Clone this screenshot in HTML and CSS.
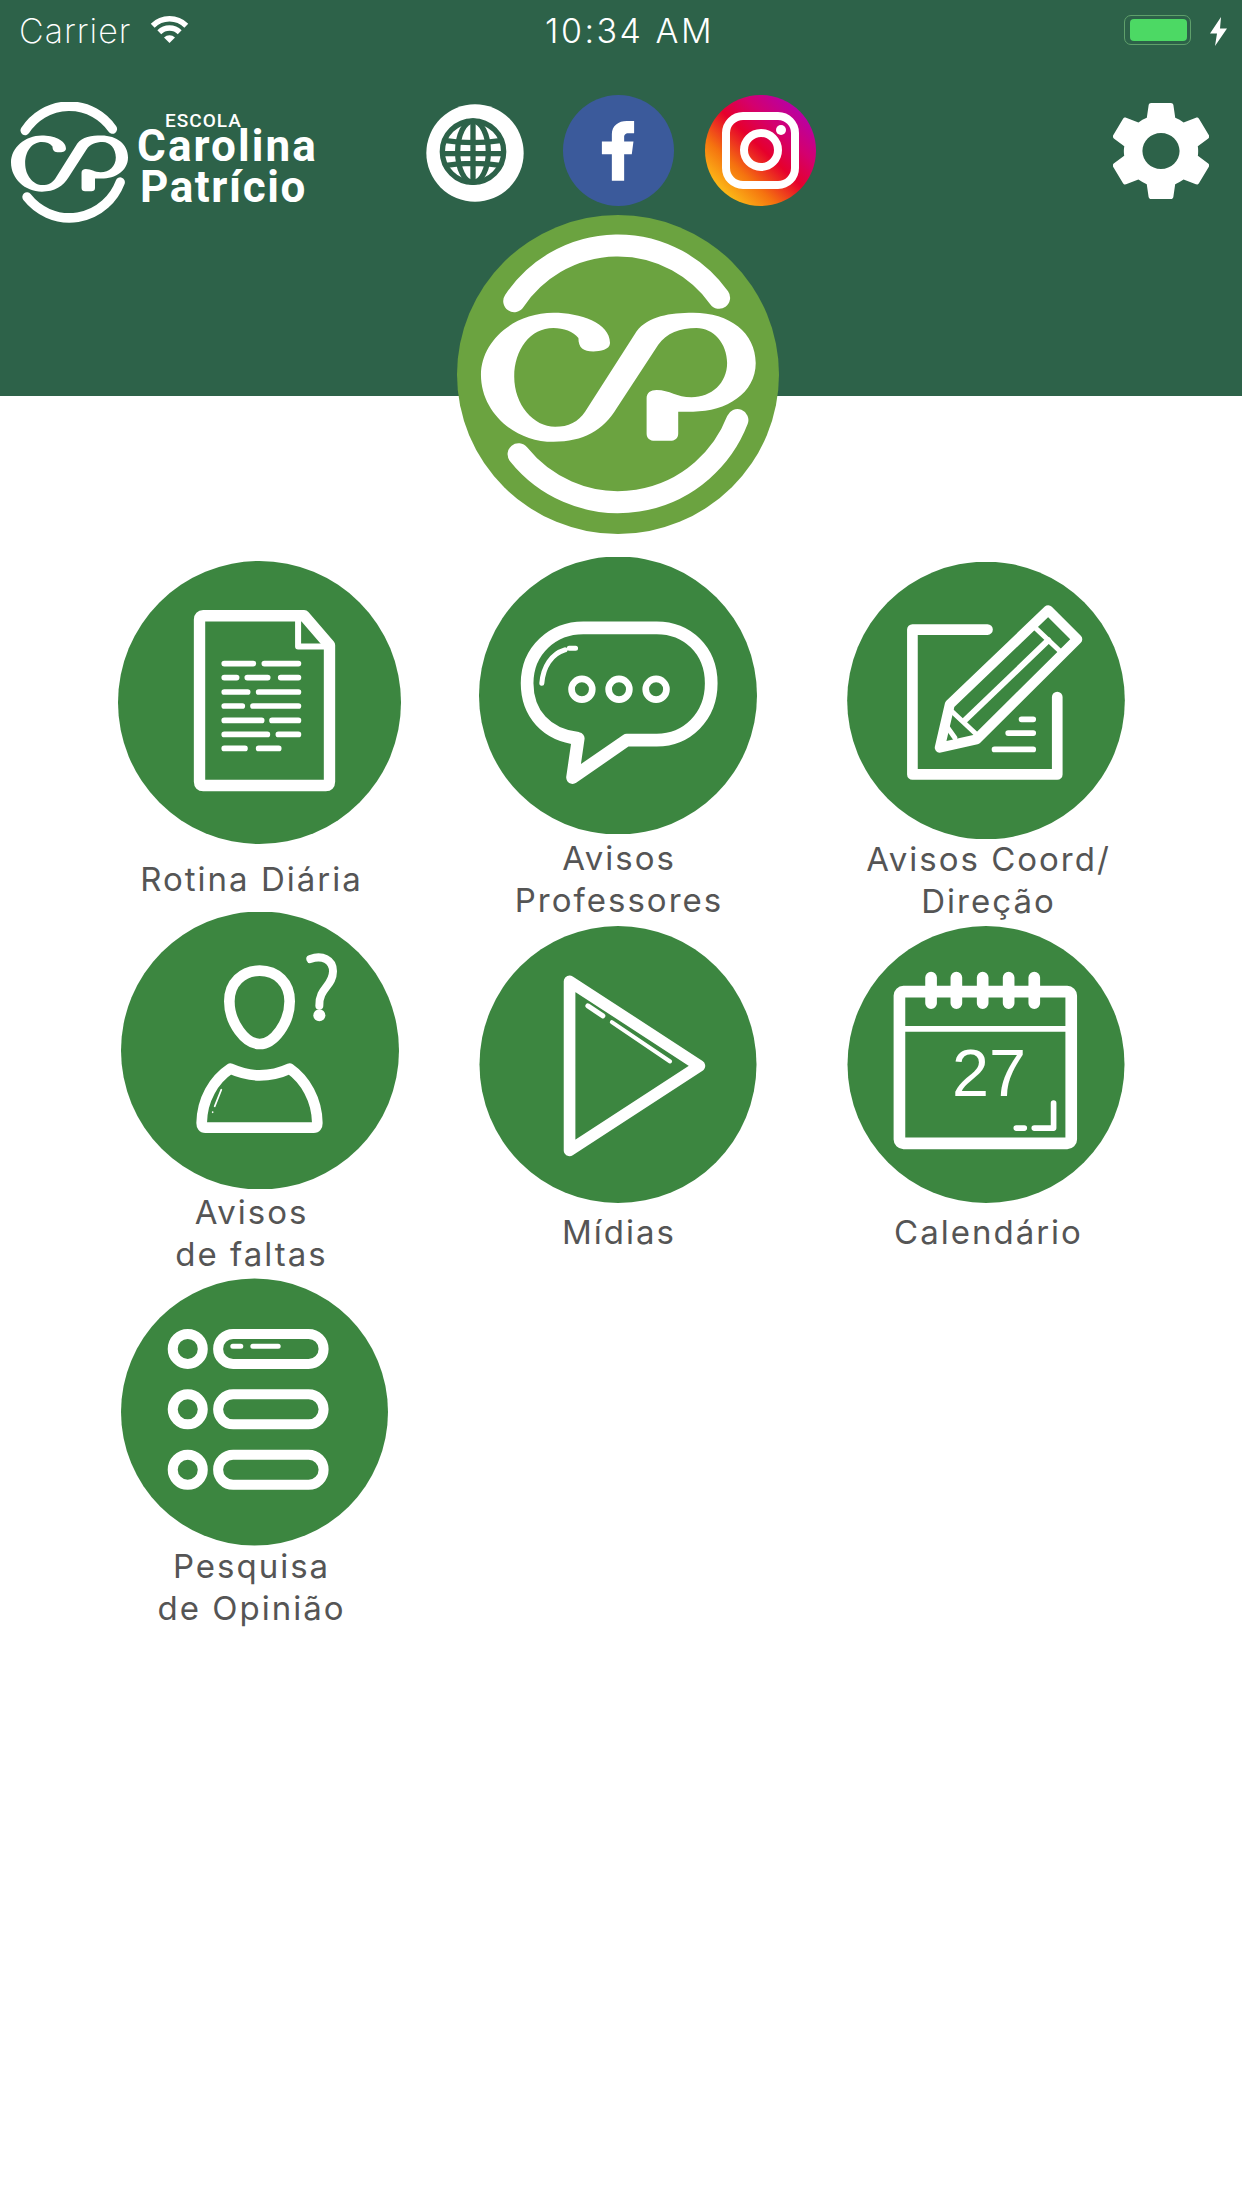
FILE: index.html
```html
<!DOCTYPE html>
<html lang="pt">
<head>
<meta charset="utf-8">
<title>Escola Carolina Patrício</title>
<link rel="stylesheet" href="styles.css">
</head>
<body>
<div class="page">
  <header class="header">
    <div class="status">
      <div class="status-left">
        <span class="carrier">Carrier</span>
        <svg class="wifi" viewBox="0 0 39 27"><path class="ln" d="M2.7 9.7A24 24 0 0 1 36.3 9.7M9.3 16.3A14.5 14.5 0 0 1 29.7 16.3"/><path class="fl" d="M14 21.5A8 8 0 0 1 25 21.5L19.5 27Z"/></svg>
      </div>
      <span class="time">10:34 AM</span>
      <div class="status-right">
        <div class="battery"><div class="battery-fill"></div></div>
        <svg class="bolt" viewBox="0 0 17 29"><path class="fl" d="M11 0L0 16.500H7L5 29L17 11.500H10Z"/></svg>
      </div>
    </div>
    <nav class="nav">
      <div class="brand">
        <svg class="brand-mark" viewBox="122 110 826 830" preserveAspectRatio="none"><use href="#cp"/></svg>
        <div class="brand-text">
          <span class="brand-small">ESCOLA</span>
          <span class="brand-line">Carolina</span>
          <span class="brand-line brand-line-2">Patrício</span>
        </div>
      </div>
      <svg class="globe" viewBox="18 28 294 292">
        <circle class="w" cx="165" cy="174" r="146"/>
        <g class="globe-lines">
          <circle cx="159" cy="170" r="92"/>
          <ellipse cx="159" cy="170" rx="46" ry="92"/>
          <path d="M159 78V262M72 136Q159 150 246 136M67 176H251M72 212Q159 198 246 212"/>
        </g>
      </svg>
      <svg class="fb" viewBox="428 0 334 334">
        <circle class="fb-bg" cx="595" cy="167" r="167"/>
        <path class="fl" d="M575 258V178H545V140H575V118C575 92 595 78 620 78H642V115H625C615 115 612 120 612 128V140H640L635 178H612V258Z"/>
      </svg>
      <svg class="insta" viewBox="0 0 111 111">
        <defs><linearGradient id="ig" x1="0.12" y1="0.95" x2="0.92" y2="0.1"><stop offset="0" stop-color="#ffd21a"/><stop offset="0.28" stop-color="#f5730f"/><stop offset="0.52" stop-color="#e6002c"/><stop offset="0.72" stop-color="#d4006e"/><stop offset="1" stop-color="#b000b4"/></linearGradient></defs>
        <circle cx="55.500" cy="55.500" r="55.500" fill="url(#ig)"/>
        <rect class="ln ig-line" x="21" y="21" width="69" height="69" rx="17"/>
        <circle class="ln ig-line" cx="56" cy="55" r="17"/>
        <circle class="fl" cx="76" cy="35" r="5"/>
      </svg>
      <svg class="gear" viewBox="2.700 2 18.600 20" preserveAspectRatio="none"><path class="fl" d="M19.140 12.940c.04-.3.06-.61.06-.94 0-.32-.02-.64-.07-.94l2.030-1.580c.18-.14.23-.41.12-.61l-1.920-3.320c-.12-.22-.37-.29-.59-.22l-2.390.96c-.5-.38-1.030-.7-1.620-.94l-.36-2.540c-.04-.24-.24-.41-.48-.41h-3.840c-.24 0-.43.17-.47.41l-.36 2.540c-.59.24-1.130.57-1.620.94l-2.390-.96c-.22-.08-.47 0-.59.22L2.740 8.870c-.12.21-.08.47.12.61l2.030 1.580c-.05.3-.09.63-.09.94s.02.64.07.94l-2.030 1.580c-.18.14-.23.41-.12.61l1.920 3.320c.12.22.37.29.59.22l2.390-.96c.5.38 1.030.7 1.620.94l.36 2.540c.05.24.24.41.48.41h3.840c.24 0 .44-.17.47-.41l.36-2.540c.59-.24 1.130-.56 1.620-.94l2.390.96c.22.08.47 0 .59-.22l1.920-3.320c.12-.22.07-.47-.12-.61l-2.010-1.580zM12 15.600c-1.980 0-3.600-1.620-3.600-3.600s1.620-3.600 3.600-3.600 3.600 1.620 3.600 3.600-1.620 3.600-3.600 3.600z"/></svg>
    </nav>
  </header>

  <svg class="hero" viewBox="50 48 968 952" preserveAspectRatio="none">
    <ellipse class="hero-bg" cx="534" cy="524" rx="484" ry="476"/>
    <g id="cp">
      <path class="ln cp-arc" d="M222 305A375 375 0 0 1 838 295"/>
      <path class="ln cp-arc" d="M235 762A385 385 0 0 0 893 660"/>
      <path class="fl" d="M415 415C400 395 370 385 340 385C270 385 222 450 222 530C222 615 280 680 345 680C385 680 415 665 435 635L590 395C625 350 690 340 760 340C870 340 948 400 948 490C948 580 860 635 760 635L715 635L715 700C715 715 705 722 690 722L645 722C630 722 620 715 620 700L620 595C620 578 632 570 650 570C690 570 710 592 755 592C815 592 862 550 862 490C862 430 820 385 770 385C720 385 680 400 655 435L530 625C490 690 430 725 340 725C220 725 122 635 122 525C122 425 220 340 340 340C420 340 510 370 510 430C510 450 480 455 460 455C430 455 415 445 415 415Z"/>
    </g>
  </svg>

  <main class="menu">
    <a class="item item-r1a">
      <svg class="disc disc-lg disc-c1" viewBox="55 33 847 847">
        <circle class="bg" cx="478.500" cy="456.500" r="423.500"/>
        <path class="ln s34" d="M310 197H612L688 285V694Q688 705 677 705H310Q299 705 299 694V208Q299 197 310 197Z"/>
        <path class="ln s18" d="M594 205V289H680"/>
        <path class="ln s17" d="M373 340H460M493 340H595M373 382H410M442 382H503M542 382H595M373 425H443M476 425H595M373 467H427M459 467H595M373 510H485M516 510H595M373 552H502M535 552H595M373 594H435M476 594H536"/>
      </svg>
      <span class="label label-gap14">Rotina Diária</span>
    </a>
    <a class="item">
      <svg class="disc" viewBox="58 22 832 829">
        <circle class="bg" cx="474" cy="436.500" r="416"/>
        <path class="ln s38" d="M370 234H590C680 234 753 300 753 400C753 500 680 570 590 570H500L338 682L355 565C260 555 202 490 202 400C202 300 280 234 370 234Z"/>
        <path class="ln s15" d="M246 400C250 350 275 312 315 300M328 295H347"/>
        <circle class="ln s20" cx="366" cy="418" r="31"/>
        <circle class="ln s20" cx="477" cy="418" r="31"/>
        <circle class="ln s20" cx="588" cy="418" r="31"/>
      </svg>
      <span class="label label-gap3">Avisos<br>Professores</span>
    </a>
    <a class="item item-r1c item-c3">
      <svg class="disc" viewBox="52 35 833 827">
        <circle class="bg" cx="468.500" cy="448.500" r="416"/>
        <path class="ln s32" d="M473 236H248V670H682V438"/>
        <path class="ln s30" d="M655 178L742 265L440 565L330 590L360 460Z"/>
        <path class="ln s15" d="M610 225L700 310M365 480L445 555M350 525L375 560"/>
        <path class="ln s18" d="M405 508L655 268"/>
        <path class="ln s17" d="M575 505H610M535 546H610M494 595H610"/>
      </svg>
      <span class="label label-up">Avisos Coord/<br>Direção</span>
    </a>

    <a class="item">
      <svg class="disc disc-c4" viewBox="62 37 834 831">
        <circle class="bg" cx="479" cy="452.500" r="417"/>
        <path class="ln s32" d="M478 213C530 213 568 250 568 305C568 370 520 433 478 433C436 433 387 370 387 305C387 250 426 213 478 213Z"/>
        <path class="ln s32" d="M390 507C420 520 450 527 478 527C510 527 540 520 568 507C615 540 650 600 651 670Q651 684 640 684H315Q304 684 304 670C305 600 340 540 390 507Z"/>
        <path class="ln s24" d="M630 178C665 165 698 180 698 215C698 260 655 265 657 318"/>
        <circle class="fl" cx="657" cy="347" r="18"/>
        <path class="ln s5" d="M363 570L343 620M337 637V638"/>
      </svg>
      <span class="label label-gap2">Avisos<br>de faltas</span>
    </a>
    <a class="item item-r2">
      <svg class="disc" viewBox="57 48 833 832">
        <circle class="bg" cx="473.500" cy="464" r="416"/>
        <path class="ln s35" d="M328 214L718 468L328 722Z"/>
        <path class="ln s15" d="M383 288L428 318"/>
        <path class="ln s12" d="M455 337L630 455"/>
      </svg>
      <span class="label label-gap8">Mídias</span>
    </a>
    <a class="item item-r2 item-c3">
      <svg class="disc" viewBox="50 48 834 832">
        <circle class="bg" cx="467" cy="464" r="416"/>
        <rect class="ln s35" x="207" y="245" width="516" height="456" rx="12"/>
        <path class="ln s18 butt" d="M207 357H723"/>
        <path class="ln s35" d="M302 203V280M378 203V280M457 203V280M535 203V280M612 203V280"/>
        <text class="cal-day" x="476" y="558">27</text>
        <path class="ln s17" d="M670 580V655H612M558 655H582"/>
      </svg>
      <span class="label label-gap8">Calendário</span>
    </a>

    <a class="item">
      <svg class="disc disc-sm disc-c7" viewBox="62 55 800 802">
        <circle class="bg" cx="462" cy="456" r="400"/>
        <circle class="ln s30" cx="262" cy="267" r="45"/>
        <circle class="ln s30" cx="262" cy="448" r="45"/>
        <circle class="ln s30" cx="262" cy="629" r="45"/>
        <rect class="ln s30" x="353" y="222" width="316" height="90" rx="45"/>
        <rect class="ln s30" x="353" y="403" width="316" height="90" rx="45"/>
        <rect class="ln s30" x="353" y="584" width="316" height="90" rx="45"/>
        <path class="ln s15" d="M397 259H421M457 259H533"/>
      </svg>
      <span class="label label-up">Pesquisa<br>de Opinião</span>
    </a>
  </main>
</div>
</body>
</html>
```
FILE: styles.css
```css
* { box-sizing: border-box; }
html, body { margin: 0; padding: 0; background: #fff; }
.page { position: relative; width: 1242px; height: 2208px; overflow: hidden; font-family: Inter, "Liberation Sans", sans-serif; }

.fl { fill: #fff; }
.w { fill: #fff; }
.ln { fill: none; stroke: #fff; stroke-linecap: round; stroke-linejoin: round; }

.header { height: 396px; background: #2d6249; color: #fff; }

.status { height: 66px; display: flex; align-items: flex-start; padding: 11px 0 0 19px; }
.status-left { width: 526px; display: flex; align-items: flex-start; }
.carrier { font-size: 34px; font-weight: 200; line-height: 40px; letter-spacing: 1px; }
.wifi { width: 39px; height: 27px; margin: 5px 0 0 19px; }
.wifi .ln { stroke-width: 5.5px; stroke-linecap: butt; }
.time { width: 166px; font-size: 34px; font-weight: 300; line-height: 40px; letter-spacing: 2.5px; white-space: nowrap; }
.status-right { margin-left: 413px; display: flex; align-items: flex-start; }
.battery { width: 67px; height: 30px; margin-top: 4px; padding: 3px 3px 3px 5px; border: 1.5px solid #5fa06b; border-radius: 7px; }
.battery-fill { height: 100%; background: #4cd964; border-radius: 4px; }
.bolt { width: 17px; height: 29px; margin: 6px 0 0 19px; }

.nav { display: flex; align-items: flex-start; padding-left: 11px; }
.brand { display: flex; width: 415px; margin-top: 36px; }
.brand-mark { width: 117px; height: 121px; flex: none; }
.brand-text { display: flex; flex-direction: column; margin-left: 9px; color: #fff; font-family: Roboto, sans-serif; font-weight: 700; }
.brand-small { font-size: 19px; line-height: 14px; margin: 12px 0 0 28px; letter-spacing: 1px; font-weight: 500; }
.brand-line { font-size: 44px; line-height: 36px; letter-spacing: 2.1px; margin-top: 0; }
.brand-line-2 { margin: 5px 0 0 3px; letter-spacing: 1.6px; }

.globe { width: 98px; height: 98px; margin-top: 38px; flex: none; }
.globe-lines { fill: none; stroke: #2d6249; stroke-width: 16px; }
.fb { width: 111px; height: 111px; margin: 29px 0 0 39px; flex: none; }
.fb-bg { fill: #3b5a9b; }
.insta { width: 111px; height: 111px; margin: 29px 0 0 31px; flex: none; }
.ig-line { stroke-width: 8px; }
.gear { width: 96px; height: 100px; margin: 35px 0 0 297px; flex: none; }

.hero { position: absolute; left: 457px; top: 215px; width: 322px; height: 319px; }
.hero-bg { fill: #6ba340; }
.cp-arc { stroke-width: 66px; }

.menu { display: grid; grid-template-columns: 361px 360px 365px; grid-template-rows: 355px 366px auto; column-gap: 7px; padding: 161px 0 0 70px; }
.item { display: flex; flex-direction: column; align-items: center; }
.item-r1a { margin-top: 4px; }
.item-r1c { margin-top: 5px; }
.item-r2 { margin-top: 14px; }
.item-c3 .disc { margin-right: 3px; }

.disc { display: block; width: 278px; height: 277px; flex: none; }
.disc-lg { width: 283px; height: 283px; }
.disc-sm { width: 267px; height: 268px; }
.disc-c1 { margin-left: 18px; }
.disc-c4 { margin-left: 19px; }
.disc-c7 { margin-left: 7px; }
.bg { fill: #3c8640; }

.s5 { stroke-width: 5px; }
.s12 { stroke-width: 12px; }
.s15 { stroke-width: 15px; }
.s17 { stroke-width: 17px; }
.s18 { stroke-width: 18px; }
.s20 { stroke-width: 20px; }
.s24 { stroke-width: 24px; }
.s30 { stroke-width: 30px; }
.s32 { stroke-width: 32px; }
.s34 { stroke-width: 34px; }
.s35 { stroke-width: 35px; }
.s38 { stroke-width: 38px; }
.butt { stroke-linecap: butt; }

.cal-day { fill: #fff; font-family: "Liberation Sans", sans-serif; font-size: 200px; text-anchor: middle; }

.label { display: block; padding-left: 2px; text-align: center; font-size: 33px; line-height: 42px; letter-spacing: 2px; color: #555; white-space: nowrap; }
.label-gap14 { margin-top: 14px; }
.label-gap8 { margin-top: 8px; }
.label-gap3 { margin-top: 3px; }
.label-gap2 { margin-top: 2px; }
.label-up { margin-top: -1px; }
```
